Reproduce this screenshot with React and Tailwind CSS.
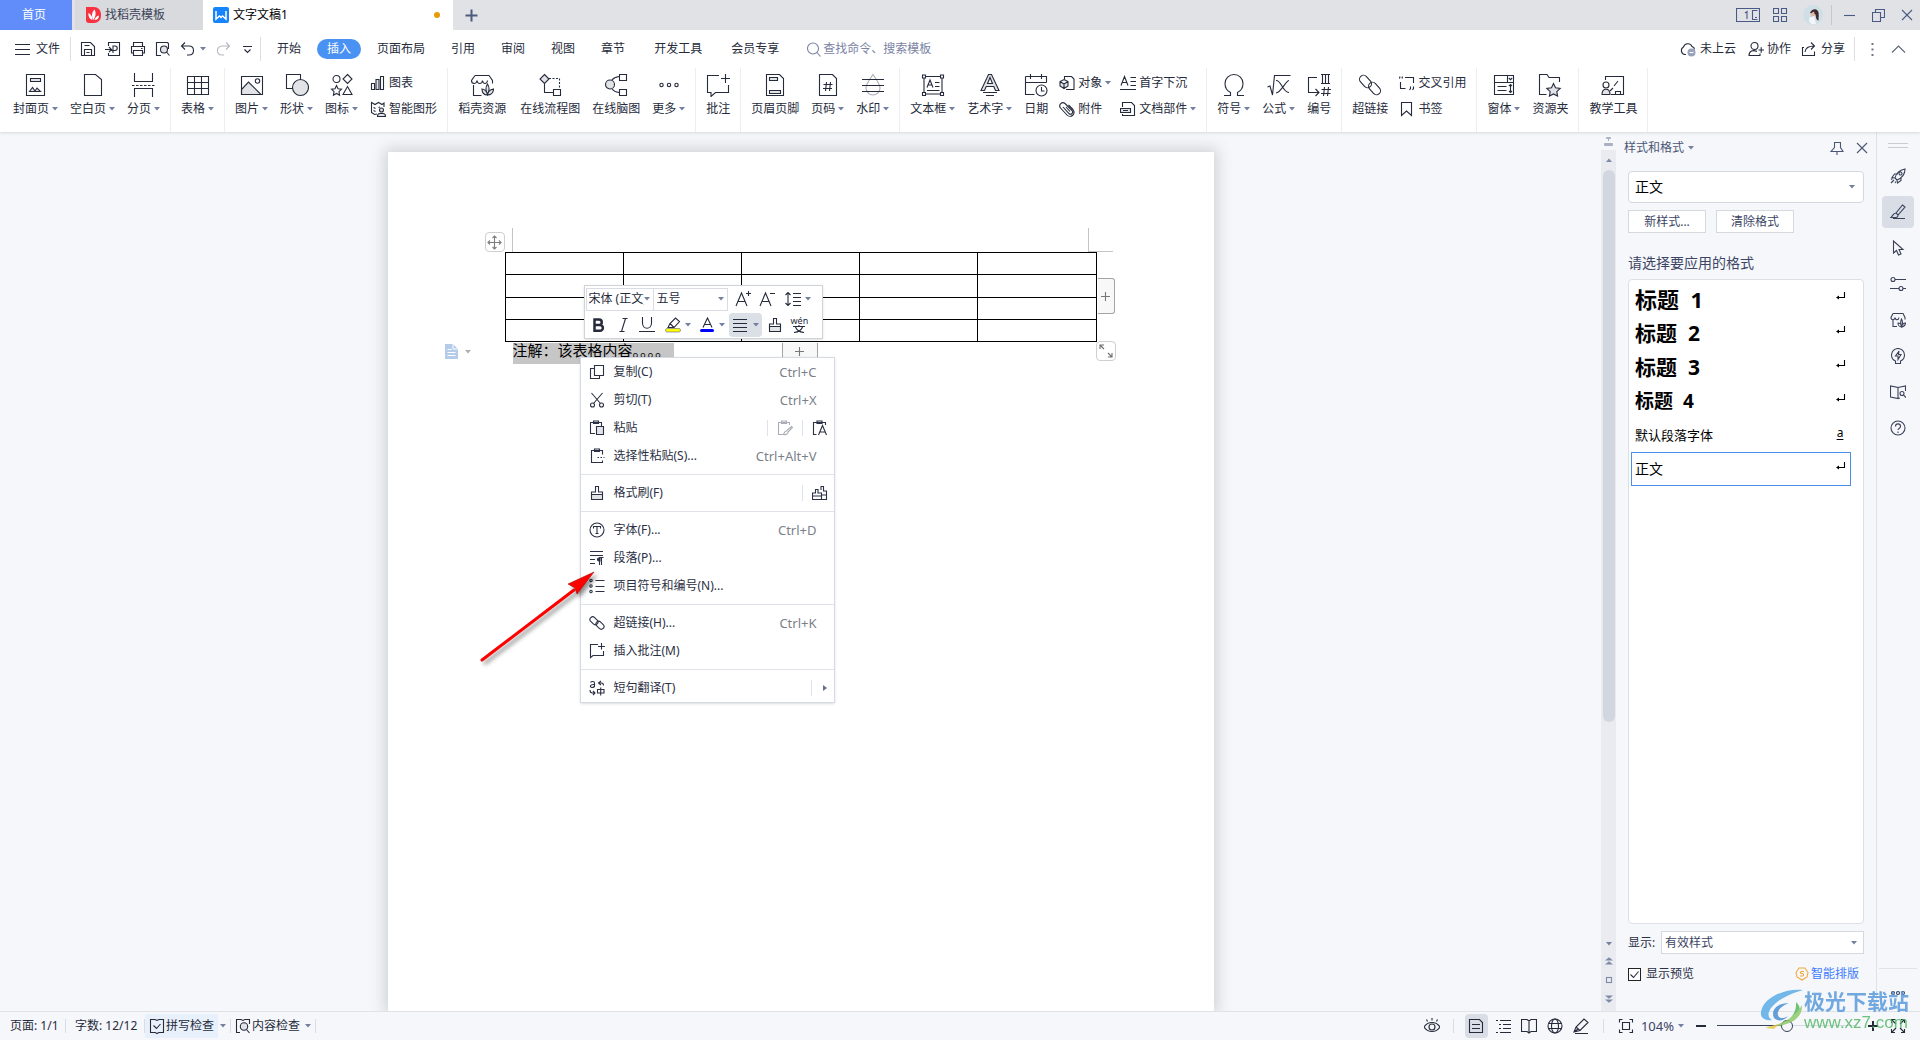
import React from "react";

/* ---------- shared primitives ---------- */

function Svg({ s = 16, w, h, className = "", children, sw = 1.1 }) {
  const W = w || s;
  const H = h || s;
  return (
    <svg
      width={W}
      height={H}
      viewBox={`0 0 ${W} ${H}`}
      fill="none"
      stroke="currentColor"
      strokeWidth={sw}
      className={"shrink-0 " + className}
      aria-hidden="true"
    >
      {children}
    </svg>
  );
}

function Caret({ className = "text-[#7580a0]" }) {
  return (
    <svg width="6" height="4" viewBox="0 0 6 4" className={"shrink-0 " + className} aria-hidden="true">
      <path d="M0 0h6L3 3.5z" fill="currentColor" />
    </svg>
  );
}

const G = "#e1e3e6";

/* ---------- ribbon icons, 24 x 24 ---------- */

const big = {
  cover: (
    <>
      <path d="M2.500 1.500h18v21h-18z" />
      <path d="M6.500 5.500h10v3h-10z" fill={G} />
      <path d="M5.500 18.500l3-4 2.500 3.500 2-3 3.500 3.500z" fill={G} />
    </>
  ),
  blank: <path d="M3.500 1.500h11l6 5v16h-17z" />,
  brk: (
    <>
      <path d="M2.500 0v8.500h18V0M2.500 24v-8.500h18V24" />
      <path d="M0 12.500h24" strokeDasharray="2.500 1.500" />
    </>
  ),
  table: <path d="M1.500 3.500h21v18h-21zM1.500 9.500h21M1.500 15.500h21M8.500 3.500v18M15.500 3.500v18" />,
  image: (
    <>
      <path d="M1.500 20.500v-4l7-7.500 12.500 12.500H1.500z" fill={G} />
      <path d="M1.500 3.500h21v18h-21z" />
      <circle cx="17.500" cy="8" r="2.200" />
    </>
  ),
  shape: (
    <>
      <path d="M1.500 1.500h14v14h-14z" />
      <circle cx="15.500" cy="14.500" r="8" fill={G} />
    </>
  ),
  icons: (
    <>
      <circle cx="6.500" cy="6" r="3.500" />
      <path d="M17.500 1.500l4.500 4.500-4.500 4.500L13 6z" />
      <path d="M6.500 12.500l1.500 3.200 3.500.5-2.500 2.400.6 3.600-3.100-1.700-3.100 1.700.6-3.600-2.500-2.400 3.500-.5z" />
      <path d="M17.500 13.500l4.500 8h-9z" />
    </>
  ),
  store: (
    <>
      <path d="M3.500 12v10.500h8M5 2.500h14l3.500 5v3M5 2.500L1.500 7.500c0 4 5 4 5.500 0 .5 4 5 4 5.500 0 .5 4 4.500 4 5 0" />
      <path d="M17.500 11c-2 3-2 7 0 11 2-4 2-8 0-11z" fill={G} />
      <path d="M17.500 22c-3.500 0-5.500-2.500-5.500-6 3 .5 5 2.500 5.500 6zM17.500 22c3.500 0 6-2.500 6-6-3 .5-5.500 2.500-6 6z" fill={G} />
    </>
  ),
  flow: (
    <>
      <path d="M6.500 1.500l4.500 4.500-4.500 4.500L2 6z" fill={G} />
      <path d="M6.500 10.500v9h9" />
      <path d="M11 5.500h10.500V16" strokeDasharray="2 1.500" />
      <path d="M15.500 16.500h7v6h-7z" />
    </>
  ),
  mind: (
    <>
      <circle cx="6" cy="11.500" r="4.500" fill={G} />
      <path d="M8 7c1.500-2 3.500-3 7-3.500M8 16c1.500 2 3.500 3 7 3.500" />
      <path d="M15.500 1.500h7v6h-7zM15.500 16.500h7v6h-7z" />
    </>
  ),
  more: (
    <>
      <circle cx="4.500" cy="12" r="1.700" />
      <circle cx="12" cy="12" r="1.700" />
      <circle cx="19.500" cy="12" r="1.700" />
    </>
  ),
  comment: <path d="M13 2.500H1.500v17h3.500v4l4.500-4h13V12M19.500 1v9M15 5.500h9" />,
  header: (
    <>
      <path d="M3.500 1.500h13l4 4v17h-17z" />
      <path d="M6.500 4.500h8v3h-8zM6.500 17.500h11v3h-11z" fill={G} />
    </>
  ),
  pageno: (
    <>
      <path d="M3.500 1.500h13l4 4v17h-17z" />
      <path d="M10.500 9l-1 9M14.500 9l-1 9M7.500 11.500h9M7 15.500h9" />
    </>
  ),
  water: (
    <>
      <path d="M12 1.500c4 6 7 9.500 7 13.500a7 7 0 0 1-14 0c0-4 3-7.500 7-13.500z" stroke="#a9adb8" />
      <path d="M1 6.500h22M1 12.500h22M1 18.500h22" />
    </>
  ),
  textbox: (
    <>
      <path d="M3 3.500h18v17.500H3z" />
      <path d="M1.500 2h3v3h-3zM19.500 2h3v3h-3zM1.500 19.500h3v3h-3zM19.500 19.500h3v3h-3z" fill="#fff" />
      <path d="M6 14.500L9 7l3 7.500M7 12h4M14 9.500h4.500M14 13.500h4.500M6 17.500h12.500" />
    </>
  ),
  wordart: (
    <>
      <path d="M10.500 1.500h3l7.500 16h-3.500l-1.700-4H8.200l-1.700 4H3zM9.500 10.500h5l-2.500-6z" fill={G} />
      <path d="M5 19.500h14M8 22.500h8" />
    </>
  ),
  date: (
    <>
      <path d="M1.500 3.500h21v6M1.500 3.500v18h9M1.500 9.500h21M6.500 1v5M17.500 1v5" />
      <circle cx="17.500" cy="17.500" r="5.500" fill="#fff" />
      <path d="M17.500 14v4h3" />
    </>
  ),
  omega: <path d="M2 22.500h6.500v-3C4.500 17.500 3 14 3 10.500a9 9 0 0 1 18 0c0 3.500-1.500 7-5.500 9v3H22" />,
  formula: <path d="M.5 14l2.500-1 2.500 9L7.500 2.500h16M9 7.500c5-1 7 12.500 13 12M22 7.500c-3 0-8 12-13 12.500" />,
  number: (
    <>
      <path d="M10 4.500H1.500v15h10M8.500 16l3.500 3.500L8.500 23" />
      <path d="M14 1.500h9M14 10.500h9M15.500 1.500v9M18.500 1.500v9M21.500 1.500v9M17.500 14l-1 9M21.500 14l-1 9M14.500 16.500H24M14 20.500h9.500" />
    </>
  ),
  link: (
    <>
      <rect x="0.500" y="4.500" width="14" height="8" rx="4" transform="rotate(48 7.500 8.500)" />
      <rect x="9.500" y="11.500" width="14" height="8" rx="4" transform="rotate(48 16.500 15.500)" />
    </>
  ),
  form: <path d="M2.500 2.500h19v19h-19zM2.500 9.500h19M15.500 2.500v7M5.500 13.500h9M5.500 17.500h9M18.500 12v7M17 13l1.500-1.500L20 13M17 18l1.500 1.500L20 18M16.800 5l1.700 1.700L20.200 5" />,
  folder: (
    <>
      <path d="M21.500 9V4.500H11l-2-3H1.500v20h7" />
      <path d="M15.500 10.500l2 4.300 4.700.6-3.400 3.200.8 4.500-4.100-2.200-4.100 2.200.8-4.500-3.400-3.200 4.700-.6z" fill={G} />
    </>
  ),
  teach: (
    <>
      <path d="M4.500 7V3.500h18v18H10M13 13l4-5M14.500 21.500v-3h5v3" />
      <circle cx="5" cy="12" r="3" />
      <path d="M1 21.500c0-7 8-7 8 0z" fill={G} />
      <path d="M9 18l3-3" />
    </>
  ),
};

const small = {
  chart: (
    <>
      <path d="M1.500 8.500h3v6h-3zM10.500 1.500h3v13h-3z" />
      <path d="M6 4.500h3v10H6z" fill={G} />
    </>
  ),
  smart: (
    <>
      <path d="M7 13l-2.500.5-3-2V1.500l3.500 2 3.500-2 3.500 2 2-1.500v4M3.500 6.500l2 1M3.500 9.500l2 1M8.500 6.500l1.500-.500" />
      <circle cx="11.500" cy="9" r="2" fill={G} />
      <path d="M7.500 15.500c0-2 1-3 2.500-3h3c1.500 0 2.500 1 2.500 3z" fill={G} />
    </>
  ),
  object: (
    <>
      <path d="M5.500 4V1.500h7l2.500 2.500v10.500H7" />
      <path d="M5 4.500l4 2v4.500l-4 2.500-4-2.500V6.500zM1 6.500l4 2.500 4-2.500M5 9v4" fill={G} />
    </>
  ),
  attach: <path d="M4 6l6 6.500a2 2 0 0 0 3-3L6 2.500a3.200 3.200 0 0 0-4.500 4.500l6.500 7a4 4 0 0 0 6-5.500L9.500 4M7 6l4 4.500" />,
  dropcap: <path d="M1 10.500L4.500 1.500 8 10.500M2.300 7.500h4.500M10.500 2.500H16M10.500 6.500H16M10.500 10.500H16M0 14.500h16" />,
  parts: (
    <>
      <path d="M2.500 6V1.500h9l3 3v10h-12V13" />
      <path d="M.5 7.500h10v4H.5zM3 9.500h5" fill={G} />
    </>
  ),
  cross: <path d="M.5 3.500L1 1.500M3 3.500l.5-2M1.500 7v6.500h5M6 2.500h8.500V8M11.500 11.500v2l-1 1.500M14.500 11.500v2l-1 1.500" />,
  bookmark: <path d="M2.500 1.500h10v13l-5-4.500-5 4.500z" />,
  save: (
    <>
      <path d="M1.500 1.500h9l4 4v9h-13z" />
      <path d="M4.500 14.500v-6h7v6M6.500 11.500h3M4.500 4.500h5" />
    </>
  ),
  out: <path d="M3.500 5V1.500h11v13h-11V12M0 8.500h6M4 6l2.500 2.500L4 11M8 12V5h2a2 2 0 0 1 0 4.500H6" />,
  print: <path d="M3.500 5V1.500h9V5M3.500 12H1.500V5.500h13V12h-2M3.500 9.500h9v5h-9zM11 7.500h1.500" />,
  find: (
    <>
      <path d="M6 14.500H1.500v-13h11l1 1V8" />
      <circle cx="9" cy="8.500" r="3.500" fill={G} />
      <path d="M11.500 11l3 3.500" />
    </>
  ),
  undo: <path d="M5 1.500L1.500 5 5 8.500M1.500 5H9c6 0 6 9 0 9H7" />,
  redo: <path d="M11 1.500L14.500 5 11 8.500M14.500 5H7c-6 0-6 9 0 9h2" />,
  brush: (
    <>
      <path d="M6.500 7V1.500h3V7h4v3h-11V7z" />
      <path d="M2.500 9.500h11v5h-11z" fill={G} />
    </>
  ),
  link: (
    <>
      <rect x="0.500" y="3" width="9" height="5.500" rx="2.700" transform="rotate(45 5 5.700)" />
      <rect x="6.500" y="7.500" width="9" height="5.500" rx="2.700" transform="rotate(45 11 10.200)" />
    </>
  ),
  copy: <path d="M5.500 1.500h9v10h-9zM5.500 4.500h-4v10h9v-3" />,
  cut: (
    <>
      <path d="M2.500 1L11.500 11.500M13.500 1L4.500 11.500" />
      <circle cx="3.500" cy="13" r="2" />
      <circle cx="12.500" cy="13" r="2" />
    </>
  ),
  paste: (
    <>
      <path d="M6 13.500H1.500v-11h11V6M4.500 1h5v2.500h-5z" />
      <path d="M7.500 6.500h7v8h-7z" fill={G} />
    </>
  ),
  special: (
    <>
      <path d="M13.500 6.500v-4h-11v12h11v-2M5.500 1h5v2.500h-5z" />
      <path d="M8.500 9.500h7" strokeDasharray="1.500 1.500" />
    </>
  ),
  pasteBrush: <path d="M6 14.500H1.500v-12h11V5M4.500 1h5v2.500h-5zM14.500 6.500l-5 4.500c-2 0-2 2-3 3.500 2 .5 4.500 0 4.500-2.500l4.500-4.500z" />,
  pasteText: <path d="M4.500 14.500h-3v-12h12V5M5 1h5v2.500H5zM6.500 15l4-9.500 4 9.500M8 12h5" />,
  brushes: <path d="M9 5V1.500h2.500V6h3v8.500H10M3.500 8V4.500H6V8h3.500v6.500H.5V8zM.5 11h9M10 10h4.500" />,
  font: (
    <>
      <circle cx="8" cy="8" r="7" />
      <path d="M4.500 6.500v-2h7v2M8 4.500v7M6.500 11.500h3" />
    </>
  ),
  para: (
    <>
      <path d="M1 1.500h13M1 5.500h13M1 9.500h5M1 13.500h5" />
      <path d="M10.500 15V8M12.500 15V8M14.500 7.500H10" />
      <path d="M11 8h-1a1.500 1.500 0 0 0 0 3h1z" fill="currentColor" />
    </>
  ),
  list: (
    <>
      <circle cx="2" cy="2.500" r="1.200" />
      <circle cx="2" cy="8" r="1.200" />
      <circle cx="2" cy="13.500" r="1.200" />
      <path d="M6.500 2.500h9M6.500 8.500h9M6.500 13.500h9" />
    </>
  ),
  note: <path d="M9 1.500H1.500v13l2.500-2h10.500V8M12.500 0v6.500M9 3.500h7" />,
  translate: <path d="M1.500 2.500c1-1.500 4-1.500 4 .5v4M5.500 4.500c-5-.5-5 3-2.500 3 1.500 0 2.500-1 2.500-2M12 1L9.500 3 12 5M9.500 3h3c1.500 0 2 1 2 2.500M1 10c0 2 1 3 2.500 3H6M4 11l2 2-2 2M8.500 9.500h6.500v3.500H8.500zM11.700 7.500v8" />,
};

/* ---------- title bar ---------- */

function TitleBar() {
  return (
    <div className="flex h-[30px] shrink-0 bg-[#e1e2e6]">
      <button className="w-[72px] bg-[#618dfb] pr-1 text-white">首页</button>
      <button className="ml-[3px] flex w-32 items-center gap-1 bg-[#d8dadd] pl-[11px] text-[#3c4257]">
        <svg width="15" height="16" viewBox="0 0 15 16" aria-hidden="true">
          <path d="M0 0h8a7 7 0 0 1 7 7v2a7 7 0 0 1-7 7H3a3 3 0 0 1-3-3z" fill="#f9303f" />
          <path d="M7.500 13C5 9 6 5 8.500 2.500 10.500 6 9.500 10 7.500 13zM6.500 13C3.500 12 2 9 2.500 6c2 1 4 3.500 4 7zM8.500 13c1-3 2.500-4 4.500-4.500 0 2.500-1.500 4.500-4.500 4.500z" fill="#fff" />
        </svg>
        找稻壳模板
      </button>
      <button className="flex w-[250px] items-center gap-1 bg-white pl-[10px] pr-[13px] text-black">
        <svg width="16" height="16" viewBox="0 0 16 16" aria-hidden="true">
          <rect width="16" height="16" rx="2" fill="#1684fc" />
          <path d="M3 4v8l3.500-3L8 10.500 9.500 9l3.500 3V4" fill="none" stroke="#fff" strokeWidth="1.500" />
        </svg>
        <span className="flex-1 text-left">文字文稿1</span>
        <span className="size-[6px] rounded-full bg-[#e79b07]" />
      </button>
      <button className="flex w-9 items-center justify-center text-[#4c5a7e]" aria-label="新建">
        <Svg s={13} sw={2}><path d="M6.500 .5v12M.5 6.500h12" /></Svg>
      </button>
      <div className="flex-1" />
      <div className="flex items-center pr-[7px] text-[#4a5a86]">
        <button aria-label="视图" className="mr-[13px]">
          <Svg w={24} h={15}>
            <path d="M.5 .5h23v13H.5zM21.500 2.500h-5v9h5M19 9.500h2" />
            <path d="M9 5l2-1.500V11" />
          </Svg>
        </button>
        <button aria-label="应用" className="mr-[15px]">
          <Svg s={15}><path d="M.5 .5h5v5h-5zM8.500 .5h5v5h-5zM.5 8.500h5v5h-5zM8.500 8.500h5v5h-5z" /></Svg>
        </button>
        <button aria-label="账户" className="mr-2">
          <svg width="20" height="20" viewBox="0 0 20 20" aria-hidden="true">
            <circle cx="10" cy="10" r="10" fill="#cfdfe6" />
            <path d="M7 8c1-3 4-4.500 6-3.500 3 1 3 4 2.500 11-2 0-2.500-3-3-6z" fill="#3a2a2e" />
            <path d="M7.500 8.500l3.500-2 1 4-3.500 1.500z" fill="#e2b7a4" />
            <path d="M6 13l5-2 2 8c-4 1-7 0-7-6z" fill="#f3f6f8" />
          </svg>
        </button>
        <span className="mr-3 h-5 w-px bg-[#c4c7ce]" />
        <button aria-label="最小化" className="mr-[17px]"><Svg s={11}><path d="M0 5.500h11" /></Svg></button>
        <button aria-label="还原" className="mr-4"><Svg s={13}><path d="M.5 3.500h8v9h-8zM3.500 3.500v-3h9v8h-4" /></Svg></button>
        <button aria-label="关闭"><Svg s={12}><path d="M1 1l10 10M11 1L1 11" /></Svg></button>
      </div>
    </div>
  );
}

/* ---------- menu row ---------- */

function MenuRow() {
  return (
    <div className="flex h-[38px] shrink-0 items-center pl-[15px] pr-[14px]">
      <button className="flex items-center gap-[6px]">
        <Svg s={15}><path d="M0 2.500h15M0 7.500h15M0 12.500h15" /></Svg>
        文件
      </button>
      <span className="ml-[10px] mr-[9px] h-6 w-px bg-[#dcdee2]" />
      <div className="flex items-center gap-[9px]">
        <button aria-label="保存"><Svg>{small.save}</Svg></button>
        <button aria-label="输出"><Svg>{small.out}</Svg></button>
        <button aria-label="打印"><Svg>{small.print}</Svg></button>
        <button aria-label="打印预览"><Svg>{small.find}</Svg></button>
        <button aria-label="撤销" className="flex items-center gap-1"><Svg>{small.undo}</Svg><Caret /></button>
        <button aria-label="恢复" className="text-[#b4b7bf]"><Svg>{small.redo}</Svg></button>
        <button aria-label="自定义" className="ml-[3px]"><Svg s={9}><path d="M0 1.500h9M1.500 4.500l3 3 3-3" /></Svg></button>
      </div>
      <span className="ml-2 mr-4 h-6 w-px bg-[#dcdee2]" />
      <nav className="flex items-center">
        <button>开始</button>
        <button className="ml-4 mr-4 h-5 rounded-full bg-[#4991f2] px-[10px] text-white">插入</button>
        <div className="flex gap-[26px]">
          <button>页面布局</button>
          <button>引用</button>
          <button>审阅</button>
          <button>视图</button>
          <button>章节</button>
        </div>
        <button className="ml-[29px]">开发工具</button>
        <button className="ml-[29px]">会员专享</button>
      </nav>
      <label className="ml-7 flex items-center gap-px text-[#7983a3]">
        <Svg s={15}><circle cx="6" cy="6.500" r="5.500" /><path d="M10 10.500l3.500 4" /></Svg>
        <input className="w-32 outline-none placeholder:text-[#7983a3]" placeholder="查找命令、搜索模板" />
      </label>
      <div className="flex-1" />
      <button className="flex items-center gap-1">
        <Svg><path d="M6 13.500H5A4 4 0 0 1 3.500 6a4.500 4.500 0 0 1 8.500-.5c1.500.5 2.500 1.500 2.500 3" /><circle cx="11.500" cy="11.500" r="4" fill="#98a2bb" stroke="none" /><path d="M9.500 11.500h4" stroke="#fff" /></Svg>
        未上云
      </button>
      <button className="ml-3 flex items-center gap-[3px]">
        <Svg><circle cx="6.500" cy="5" r="3.500" /><path d="M9 10.500c-4-2-8-.5-8 4h11v-2M10.500 9h5.500M13.200 6.200v5.500" /></Svg>
        协作
      </button>
      <button className="ml-[10px] flex items-center gap-1">
        <Svg><path d="M3 6.500H1.500v8h12v-4M4 11c.5-4 3-6 9-6M10 1.500L13.500 5 10 8.500" /></Svg>
        分享
      </button>
      <span className="ml-[9px] h-6 w-px bg-[#dcdee2]" />
      <button aria-label="更多" className="ml-4 text-[#6f7689]">
        <Svg w={3} h={13} sw={2}><path d="M1.500 0v2M1.500 5.500v2M1.500 11v2" /></Svg>
      </button>
      <button aria-label="折叠功能区" className="ml-[17px] text-[#5c6478]"><Svg s={15}><path d="M1 10.500l6.500-6.500 6.500 6.500" /></Svg></button>
    </div>
  );
}

/* ---------- ribbon ---------- */

function Big({ icon, label, caret, wide }) {
  return (
    <button className={"flex flex-col items-center gap-[3px] " + (wide ? "ml-[2px] w-[60px]" : "")}>
      <Svg s={24}>{big[icon]}</Svg>
      <span className="flex items-center gap-[3px] leading-[18px]">
        {label}
        {caret && <Caret />}
      </span>
    </button>
  );
}

function Small({ icon, label, caret }) {
  return (
    <button className="flex items-center gap-[3px] leading-[18px]">
      <Svg>{small[icon]}</Svg>
      {label}
      {caret && <Caret />}
    </button>
  );
}

function Group({ children }) {
  return <div className="flex gap-3 border-r border-[#eceef1] px-[10px] pt-[5px]">{children}</div>;
}

function Stack({ children }) {
  return <div className="flex flex-col gap-[8px] pt-px">{children}</div>;
}

function Ribbon() {
  return (
    <div className="flex h-16 shrink-0 pl-[3px]">
      <Group>
        <Big icon="cover" label="封面页" caret />
        <Big icon="blank" label="空白页" caret />
        <Big icon="brk" label="分页" caret />
      </Group>
      <Group><Big icon="table" label="表格" caret /></Group>
      <Group>
        <Big icon="image" label="图片" caret />
        <Big icon="shape" label="形状" caret />
        <Big icon="icons" label="图标" caret />
        <Stack>
          <Small icon="chart" label="图表" />
          <Small icon="smart" label="智能图形" />
        </Stack>
      </Group>
      <Group>
        <Big icon="store" label="稻壳资源" />
        <Big icon="flow" label="在线流程图" wide />
        <Big icon="mind" label="在线脑图" />
        <Big icon="more" label="更多" caret />
      </Group>
      <Group><Big icon="comment" label="批注" /></Group>
      <Group>
        <Big icon="header" label="页眉页脚" />
        <Big icon="pageno" label="页码" caret />
        <Big icon="water" label="水印" caret />
      </Group>
      <Group>
        <Big icon="textbox" label="文本框" caret />
        <Big icon="wordart" label="艺术字" caret />
        <Big icon="date" label="日期" />
        <div className="-ml-px flex gap-[9px]">
          <Stack>
            <Small icon="object" label="对象" caret />
            <Small icon="attach" label="附件" />
          </Stack>
          <Stack>
            <Small icon="dropcap" label="首字下沉" />
            <Small icon="parts" label="文档部件" caret />
          </Stack>
        </div>
      </Group>
      <Group>
        <Big icon="omega" label="符号" caret />
        <Big icon="formula" label="公式" caret />
        <Big icon="number" label="编号" />
      </Group>
      <Group>
        <Big icon="link" label="超链接" />
        <div className="-ml-px">
          <Stack>
            <Small icon="cross" label="交叉引用" />
            <Small icon="bookmark" label="书签" />
          </Stack>
        </div>
      </Group>
      <Group>
        <Big icon="form" label="窗体" caret />
        <Big icon="folder" label="资源夹" />
      </Group>
      <Group><Big icon="teach" label="教学工具" /></Group>
    </div>
  );
}

/* ---------- floating format bar ---------- */

function MiniToolbar() {
  return (
    <div className="absolute left-[196px] top-[133px] w-[239px] border border-[#cfd3da] bg-white p-px shadow-sm">
      <div className="flex h-6 items-center">
        <label className="flex h-[23px] w-[68px] items-center border border-[#d9dce2] pl-[2px] pr-[3px]">
          <select aria-label="字体" className="w-0 flex-1 appearance-none overflow-hidden text-clip whitespace-nowrap outline-none">
            <option>宋体 (正文)</option>
          </select>
          <Caret />
        </label>
        <label className="flex h-[23px] w-[74px] items-center border border-l-0 border-[#d9dce2] px-[3px]">
          <select aria-label="字号" className="w-0 flex-1 appearance-none outline-none">
            <option>五号</option>
          </select>
          <Caret />
        </label>
        <button aria-label="增大字号" className="ml-[7px]"><Svg><path d="M1 15L6.500 2l5.500 13M3 10.500h7M13.500 0v5M11 2.500h5" /></Svg></button>
        <button aria-label="减小字号" className="ml-2"><Svg><path d="M1 15L6.500 2l5.500 13M3 10.500h7M11 2.500h5" /></Svg></button>
        <button aria-label="行距" className="ml-[10px] flex items-center gap-1"><Svg><path d="M3 1.500v13M.5 4L3 1.500 5.500 4M.5 12L3 14.500 5.500 12M8 2.500h8M8 6.500h8M8 10.500h8M8 14.500h8" /></Svg><Caret /></button>
      </div>
      <div className="mt-[2px] flex h-6 items-center pl-[5px]">
        <button aria-label="加粗" className="w-[18px]"><Svg sw={2.5}><path d="M3.500 2.500H8a2.700 2.700 0 0 1 0 5.500H3.500zM3.500 8H9a2.900 2.900 0 0 1 0 5.800H3.500z" /></Svg></button>
        <button aria-label="倾斜" className="ml-[7px]"><Svg><path d="M6.500 1.500h5M3.500 14.500h5M9.500 1.500l-4 13" /></Svg></button>
        <button aria-label="下划线" className="ml-[7px]"><Svg><path d="M3.500 0v6c0 7 9 7 9 0V0M0 14.500h16" /></Svg></button>
        <button aria-label="突出显示" className="ml-[10px] flex items-center gap-1">
          <Svg>
            <path d="M3 10.500l2-4 5.500-5.500 4 3.500-5.500 6H3zM5 6.500l4 4" />
            <rect x=".5" y="11.500" width="15" height="3.500" rx="1.700" fill="#ff0" stroke="#6f7689" strokeWidth=".7" />
          </Svg>
          <Caret />
        </button>
        <button aria-label="字体颜色" className="ml-[9px] flex items-center gap-1">
          <Svg w={15} h={16}>
            <path d="M3 10.500L7.500 1 12 10.500M4.500 7.500h6" />
            <rect x="0" y="12" width="14" height="3" rx="1.500" fill="#00f" stroke="none" />
          </Svg>
          <Caret />
        </button>
        <button aria-label="对齐" className="ml-1 flex h-6 w-[33px] items-center justify-center gap-[5px] rounded-sm bg-[#dbe0e6]">
          <Svg><path d="M1 2.500h14M1 6.500h14M1 10.500h14M1 14.500h14" /></Svg>
          <Caret />
        </button>
        <button aria-label="格式刷" className="ml-[5px]"><Svg>{small.brush}</Svg></button>
        <button aria-label="拼音指南" className="ml-2 flex flex-col items-center text-[9px] leading-[8px]">
          <span>wén</span>
          <Svg w={12} h={8}><path d="M0 1.500h12M6 0v1.500M2.500 2c1 3 4 5 8.500 5.500M9.500 2c-1 3-4 5-8.500 5.500" /></Svg>
        </button>
      </div>
    </div>
  );
}

/* ---------- context menu ---------- */

function Item({ icon, label, hint, children }) {
  return (
    <button className="flex h-7 w-full items-center gap-[9px] pl-2 text-left text-[#2b3045]">
      <Svg>{small[icon]}</Svg>
      <span className="flex-1">{label}</span>
      {hint && <span className="pr-[17px] text-[13px] text-[#7b7f8a]">{hint}</span>}
      {children}
    </button>
  );
}

const Rule = () => <hr className="my-1 border-[#dfe2ea]" />;
const Bar = () => <span className="h-4 w-px bg-[#dfe2ea]" />;

function ContextMenu() {
  return (
    <div className="absolute left-[192px] top-[205px] w-[255px] border border-[#d5dae5] bg-white shadow-sm">
      <Item icon="copy" label="复制(C)" hint="Ctrl+C" />
      <Item icon="cut" label="剪切(T)" hint="Ctrl+X" />
      <Item icon="paste" label="粘贴">
        <span className="flex items-center gap-[9px] pr-[6px]">
          <Bar />
          <Svg className="text-[#a9adb5]">{small.pasteBrush}</Svg>
          <Bar />
          <Svg>{small.pasteText}</Svg>
        </span>
      </Item>
      <Item icon="special" label="选择性粘贴(S)..." hint="Ctrl+Alt+V" />
      <Rule />
      <Item icon="brush" label="格式刷(F)">
        <span className="flex items-center gap-[9px] pr-[6px]">
          <Bar />
          <Svg>{small.brushes}</Svg>
        </span>
      </Item>
      <Rule />
      <Item icon="font" label="字体(F)..." hint="Ctrl+D" />
      <Item icon="para" label="段落(P)..." />
      <Item icon="list" label="项目符号和编号(N)..." />
      <Rule />
      <Item icon="link" label="超链接(H)..." hint="Ctrl+K" />
      <Item icon="note" label="插入批注(M)" />
      <Rule />
      <Item icon="translate" label="短句翻译(T)">
        <span className="flex items-center gap-[11px] pr-[7px] text-[#68718c]">
          <Bar />
          <svg width="4" height="6" viewBox="0 0 4 6" aria-hidden="true"><path d="M0 0v6l4-3z" fill="currentColor" /></svg>
        </span>
      </Item>
    </div>
  );
}

/* ---------- document ---------- */

function Document() {
  const rows = ["h-[22px]", "h-[23px]", "h-[22px]", "h-[22px]"];
  return (
    <main className="flex min-w-0 flex-1 justify-center overflow-hidden pt-5">
      <div className="relative w-[826px] shrink-0 bg-white pl-[117px] pt-[100px] shadow-[0_0_14px_3px_rgba(90,95,105,0.25)]">
        <table className="w-[592px] table-fixed border-collapse border border-black">
          <tbody>
            {rows.map((h, r) => (
              <tr key={r} className={h}>
                {[0, 1, 2, 3, 4].map((c) => (
                  <td key={c} className="border border-black p-0" />
                ))}
              </tr>
            ))}
          </tbody>
        </table>
        <p className="ml-2 mt-px w-fit bg-[#c6c6c6] pb-2 pr-[11px] font-['Noto_Sans_CJK_SC',sans-serif] text-[15px] leading-[13px] text-black">
          注解：该表格内容<span className="[font-feature-settings:'halt']">。。。。</span>
        </p>

        {/* margin corner marks */}
        <span className="absolute left-[124px] top-[76px] h-6 w-px bg-[#c4c4c4]" />
        <span className="absolute left-[700px] top-[76px] h-6 w-[25px] border-b border-l border-[#c4c4c4]" />

        {/* table handles */}
        <button aria-label="移动表格" className="absolute left-[97px] top-[80px] flex size-5 items-center justify-center rounded-sm border border-[#cfcfcf] bg-white text-[#7d7d7d]">
          <Svg s={15}><path d="M7.500 1v13M1 7.500h13M5.500 3l2-2 2 2M5.500 12l2 2 2-2M3 5.500l-2 2 2 2M12 5.500l2 2-2 2" /></Svg>
        </button>
        <button aria-label="添加列" className="absolute left-[710px] top-[126px] flex h-9 w-[17px] items-center justify-center rounded-r-[3px] border border-l-0 border-[#a3a3a3] bg-[#f8f8f8] text-[#777]">
          <Svg s={9}><path d="M4.500 0v9M0 4.500h9" /></Svg>
        </button>
        <button aria-label="缩放表格" className="absolute left-[708px] top-[189px] flex size-5 items-center justify-center rounded-sm border border-[#cfcfcf] bg-white text-[#6e6e6e]">
          <Svg s={14}><path d="M5 5L1.500 1.500M1 5V1h4M9 9l3.500 3.500M13 9v4H9" /></Svg>
        </button>
        <button aria-label="添加行" className="absolute left-[394px] top-[191px] flex h-4 w-9 items-center justify-center border-x border-[#a3a3a3] bg-[#f8f8f8] text-[#777]">
          <Svg s={9}><path d="M4.500 0v9M0 4.500h9" /></Svg>
        </button>
        <button aria-label="粘贴选项" className="absolute left-[57px] top-[192px] flex items-center gap-[7px]">
          <svg width="13" height="15" viewBox="0 0 13 15" aria-hidden="true">
            <path d="M0 0h8l5 5v10H0z" fill="#b4cbea" />
            <path d="M2.500 5.500h4M2.500 8.500h8M2.500 11.500h8M8 0v5h5" stroke="#fff" fill="none" />
          </svg>
          <Caret className="text-[#b0b0b0]" />
        </button>

        <MiniToolbar />
        <ContextMenu />

        <svg width="130" height="106" viewBox="0 0 130 106" className="absolute left-[88px] top-[411px] drop-shadow-[3px_3px_2px_rgba(0,0,0,0.45)]" aria-hidden="true">
          <path d="M6 97L98 27" stroke="#f00" strokeWidth="3" strokeLinecap="round" />
          <path d="M118 9L92 21l7 4 2 6z" fill="#f00" stroke="#a01010" strokeWidth=".6" />
        </svg>
      </div>
    </main>
  );
}

function ScrollColumn() {
  return (
    <div className="flex w-[15px] shrink-0 flex-col items-center text-[#7f8aa8]">
      <div className="flex h-[18px] items-center">
        <Svg s={9} sw={1} className="text-[#aab1c2]"><path d="M2.500 .5h4v1h-4zM4.500 2v2M.5 6.500h8v2h-8z" fill="currentColor" /></Svg>
      </div>
      <div className="flex w-full flex-1 flex-col items-center bg-[#e9ebf1]">
        <Caret className="my-[8px] rotate-180" />
        <div className="h-[552px] w-3 rounded-full bg-[#d2d6df]" />
        <div className="flex-1" />
        <div className="flex flex-col items-center gap-[11px] pb-[8px]">
          <Caret />
          <Svg s={8}><path d="M1.500 3h5L4 1zM1.500 7h5L4 5z" fill="currentColor" /></Svg>
          <Svg s={8}><rect x="1.500" y="1.500" width="5" height="5" /></Svg>
          <Svg s={8}><path d="M1.500 1h5L4 3zM1.500 5h5L4 7z" fill="currentColor" /></Svg>
        </div>
      </div>
    </div>
  );
}

/* ---------- styles panel ---------- */

const Return = () => (
  <Svg w={11} h={14} className="text-black">
    <path d="M9.500 0v5.500H2" />
    <path d="M4 3.500v4L1 5.500z" fill="currentColor" stroke="none" />
  </Svg>
);

const heading = "whitespace-pre font-bold ";

const styles = [
  { name: "标题  1", cls: heading + "text-[22px]" },
  { name: "标题  2", cls: heading + "text-[21px]" },
  { name: "标题  3", cls: heading + "text-[21px]" },
  { name: "标题  4", cls: heading + "text-[19px]" },
  { name: "默认段落字体", cls: "text-[13px]", char: true },
  { name: "正文", cls: "text-[14px]", on: true },
];

function StylesPanel() {
  return (
    <aside className="flex w-[261px] shrink-0 flex-col border-r border-[#dfe2e7] px-3 pb-7 text-[#3c4565]">
      <header className="-mx-1 flex h-[31px] items-center text-[#4b5675]">
        <button className="flex items-center gap-1">样式和格式<Caret /></button>
        <span className="flex-1" />
        <button aria-label="固定" className="mr-3"><Svg s={14}><path d="M4 1.500h7M4.500 1.500v5L1 10.500h12L10.500 6.500v-5M7 10.500V14" /></Svg></button>
        <button aria-label="关闭窗格"><Svg s={12}><path d="M1 1l10 10M11 1L1 11" /></Svg></button>
      </header>
      <label className="mt-2 flex h-8 items-center rounded-sm border border-[#d4d8df] bg-white pl-[6px] pr-2">
        <select aria-label="当前样式" className="flex-1 appearance-none text-[14px] text-black outline-none"><option>正文</option></select>
        <Caret />
      </label>
      <div className="mt-[7px] flex gap-[10px]">
        <button className="h-[23px] w-[78px] border border-[#d4d8df] bg-white leading-none">新样式...</button>
        <button className="h-[23px] w-[78px] border border-[#d4d8df] bg-white leading-none">清除格式</button>
      </div>
      <h2 className="mt-[19px] text-[14px] leading-[22px]">请选择要应用的格式</h2>
      <ul className="mt-[5px] flex-1 rounded-sm border border-[#dcdfe5] bg-white px-[2px] pt-[2px] text-black">
        {styles.map((s) => (
          <li key={s.name}>
            <button
              className={
                "flex h-[34px] w-[220px] items-center justify-between border pl-[3px] pr-1 text-left leading-none " +
                (s.on ? "border-[#4a8fec]" : "border-transparent")
              }
            >
              <span className={s.cls}>{s.name}</span>
              {s.char ? <span className="w-3 pb-1 text-center text-[12px] underline underline-offset-2">a</span> : <Return />}
            </button>
          </li>
        ))}
      </ul>
      <div className="mt-[7px] flex items-center text-[#2b3045]">
        <label htmlFor="scope" className="w-[33px]">显示:</label>
        <div className="flex h-[23px] flex-1 items-center border border-[#d4d8df] bg-white pl-[3px] pr-[6px]">
          <select id="scope" className="flex-1 appearance-none text-[#3c4565] outline-none"><option>有效样式</option></select>
          <Caret />
        </div>
      </div>
      <div className="mt-[11px] flex items-center justify-between">
        <label className="flex items-center gap-[5px] text-[#2b3045]">
          <span className="grid size-[13px]">
            <input type="checkbox" defaultChecked className="col-start-1 row-start-1 size-[13px] appearance-none border border-[#222] bg-white" />
            <Svg s={13} className="pointer-events-none col-start-1 row-start-1"><path d="M2.500 6.500l3 3 5-6" /></Svg>
          </span>
          显示预览
        </label>
        <a href="#layout" className="flex items-center gap-[2px] pr-[5px] text-[#3d7bff]">
          <Svg s={14} className="text-[#f0a93c]"><path d="M4 1h6l3 4.500-1 4.500-5 3-5-3L1 5.500zM9 4.500H6.500c-1.500 0-1.500 2 0 2h1c1.500 0 1.500 2.500 0 2.500H5" /></Svg>
          智能排版
        </a>
      </div>
    </aside>
  );
}

/* ---------- right tool strip ---------- */

const tools = [
  ["助手", <path key="a" d="M7 12L5 10c1-5 5-8 10-9 0 5-3 9-8 11zM5 10L2 9.500 4.500 6H8M7 12l.5 3 3.500-2.500V9M1 15l3-3M1 11.500l1.500-1M5 15l1-1.500M10.500 4a1.500 1.500 0 1 1 0 3 1.500 1.500 0 0 1 0-3z" />],
  ["样式", <path key="a" d="M6 9l6.500-8 2.500 2-7 8zM6 9c-3 0-3 3-5 4.500h5c2 0 2-1 2-2.500M3 14.500h12" />],
  ["选择", <path key="a" d="M3.500 1v12l3-2.500 2 4.500 2.500-1-2-4.500h4z" />],
  ["设置", <path key="a" d="M5 3.500h11M0 12.500h9M13 12.500h3M1 3.500a2 2 0 1 1 4 0 2 2 0 0 1-4 0zM9 12.500a2 2 0 1 1 4 0 2 2 0 0 1-4 0z" />],
  ["资源", <path key="a" d="M3 8v6.500h4M3 1.500h10l2 4v2M3 1.500l-2 4c0 3 3.500 3 4 0 .5 3 3.500 3 4 0M11.500 7c-1 2-1 5 0 8 1.200-3 1.200-6 0-8zM11.500 15c-2 0-3.500-2-3.500-4 2 0 3.500 2 3.500 4zM11.500 15c2 0 4-2 4-4-2 0-3.500 2-4 4z" />],
  ["灵感", <path key="a" d="M5.500 13C3 12 1.500 9.500 1.500 7a6.500 6.500 0 0 1 13 0c0 2.500-1.500 5-4 6v2.500h-5zM9 3L5.500 8H8v3.500l3-5H8.500z" />],
  ["查阅", <path key="a" d="M8 3.500v11L.5 13V2zM8 3.500L15.500 2v5M8 14.500l2-.5M10 9.500a2 2 0 1 1 4 0 2 2 0 0 1-4 0zM14 11.500l2 2" />],
  ["帮助", <path key="a" d="M1 8a7 7 0 1 1 14 0A7 7 0 0 1 1 8zM5.500 6.500c0-3.500 5-3.500 5 0 0 2-2.500 2-2.500 3.500M8 11.500V13" />],
];

function ToolStrip() {
  return (
    <aside className="flex w-[43px] shrink-0 flex-col items-center pr-px pt-[11px] text-[#3a4159]">
      <span className="h-[5px] w-5 border-y border-[#c9ccd3]" />
      <div className="mt-3 flex flex-col gap-1">
        {tools.map(([name, icon], i) => (
          <button key={name} aria-label={name} className={"flex size-8 items-center justify-center rounded-sm " + (i === 1 ? "bg-[#d9dee6]" : "")}>
            <Svg>{icon}</Svg>
          </button>
        ))}
      </div>
      <div className="flex-1" />
      <div className="flex h-[43px] w-[38px] justify-center border-t border-[#dfe2e7] pt-5">
        <Svg w={16} h={8}><circle cx="3" cy="4" r="1.500" /><circle cx="8" cy="4" r="1.500" /><circle cx="13" cy="4" r="1.500" /></Svg>
      </div>
    </aside>
  );
}

/* ---------- status bar ---------- */

const Sep = () => <span className="h-[14px] w-px shrink-0 bg-[#dadde3]" />;

function StatusBar() {
  return (
    <footer className="flex h-[29px] shrink-0 items-center border-t border-[#dfe2e7] bg-[#f5f7fa] pb-px pl-[10px] pr-[14px]">
      <span className="w-[55px]">页面: 1/1</span>
      <Sep />
      <span className="w-[78px] pl-[9px]">字数: 12/12</span>
      <Sep />
      <button className="flex h-6 w-[73px] items-center gap-px bg-[#e8f0fb] pl-1">
        <Svg><path d="M6 1.500H1.500v13H6l2 1 2-1h4.500v-13H10l-2 1zM4.500 7.500l3 3 4-4.500" /></Svg>
        拼写检查
      </button>
      <span className="flex w-3 pl-[2px]"><Caret /></span>
      <Sep />
      <button className="ml-[4px] flex items-center gap-px">
        <Svg><path d="M5 14.500H1.500v-13H6l2 1 2-1h4.500V6" /><circle cx="9" cy="8.500" r="3.700" fill={G} /><path d="M11.500 11.500l3 3.500" /></Svg>
        内容检查
        <span className="pl-1"><Caret /></span>
      </button>
      <span className="w-1" />
      <Sep />
      <div className="flex-1" />
      <button aria-label="护眼模式" className="mr-[13px]"><Svg><path d="M0 9c4-6 12-6 16 0-4 6-12 6-16 0zM8 0v2.500M2.500 1.500l1 2M13.500 1.500l-1 2" /><circle cx="8" cy="9" r="3" /></Svg></button>
      <Sep />
      <button aria-label="页面视图" className="ml-[11px] flex h-6 w-[23px] items-center justify-center rounded-sm bg-[#d9dee6]"><Svg><path d="M1.500 1.500h10l3 3v10h-13zM4 6.500h8M4 10.500h8" /></Svg></button>
      <button aria-label="大纲" className="ml-2"><Svg><path d="M0 2.500h2M4 2.500h11M3 6.500h2M7 6.500h8M3 10.500h2M7 10.500h8M0 14.500h2M4 14.500h11" /></Svg></button>
      <button aria-label="阅读版式" className="ml-[9px]"><Svg><path d="M.5 1.500H6l2 1.500 2-1.500h5.500v12H10L8 15l-2-1.500H.5zM8 3v12" /></Svg></button>
      <button aria-label="Web版式" className="ml-[10px]"><Svg><circle cx="8" cy="8" r="7" /><ellipse cx="8" cy="8" rx="3.500" ry="7" /><path d="M1.500 5.500h13M1.500 10.500h13" /></Svg></button>
      <button aria-label="写作模式" className="ml-[10px]"><Svg><path d="M1 14l2-5 8-8 4 3.500-8 8zM3 9l4 3.500M1 14l4-3M2 15.500h13" /></Svg></button>
      <span className="w-[14px]" />
      <Sep />
      <button aria-label="适应窗口" className="ml-[14px]"><Svg><path d="M1.500 4.500v-3h3M11.500 1.500h3v3M14.500 11.500v3h-3M4.500 14.500h-3v-3M4.500 4.500h7v7h-7z" /></Svg></button>
      <button className="ml-[7px] flex items-center gap-1 text-[13px] text-[#3c4565]">104%<Caret /></button>
      <button aria-label="缩小" className="ml-3"><Svg s={10} sw={2}><path d="M0 5h10" /></Svg></button>
      <input
        type="range"
        aria-label="显示比例"
        defaultValue="50"
        className="mx-[11px] h-3 w-[140px] appearance-none bg-[linear-gradient(to_right,#3a4159_50%,#d5d9e2_50%)] bg-[length:100%_1px] bg-center bg-no-repeat [&::-webkit-slider-thumb]:size-3 [&::-webkit-slider-thumb]:appearance-none [&::-webkit-slider-thumb]:rounded-full [&::-webkit-slider-thumb]:border [&::-webkit-slider-thumb]:border-[#3a4159] [&::-webkit-slider-thumb]:bg-[#f5f7fa]"
      />
      <button aria-label="放大"><Svg s={10} sw={2}><path d="M0 5h10M5 0v10" /></Svg></button>
      <button aria-label="全屏" className="ml-3"><Svg><path d="M1.500 5V1.500H5M11 1.500h3.500V5M14.500 11v3.500H11M5 14.500H1.500V11M1.500 1.500l4.500 4.500M14.500 1.500L10 6M14.500 14.500L10 10M1.500 14.500L6 10" /></Svg></button>
    </footer>
  );
}

function Watermark() {
  return (
    <div className="pointer-events-none absolute bottom-2 right-[11px] flex items-center opacity-85">
      <svg width="44" height="42" viewBox="0 0 44 42" aria-hidden="true">
        <path d="M43 1C24-1 3 9 1 23c-1 6 4 9 11 8C2 25 14 9 43 1z" fill="#5aaee6" />
        <path d="M14 29c-4-9 5-15 15-15-8 3-14 9-10 14 2 2 6 1 9-1-4 5-10 6-14 2z" fill="#4a8fd2" />
        <path d="M36 13c9 8 2 21-15 22 9-3 16-11 15-22z" fill="#5cb860" />
        <path d="M42 16c1 13-12 22-36 22 14-2 28-8 36-22z" fill="#8ecb6a" />
        <path d="M5 39l14-4-5 5z" fill="#e7c84a" />
      </svg>
      <div className="flex flex-col">
        <span className="text-[21px] font-bold leading-[26px] text-[#5b9bdc]">极光下载站</span>
        <span className="font-['Liberation_Sans',sans-serif] text-[17px] leading-[18px] text-[#55b868]">www.xz7.com</span>
      </div>
    </div>
  );
}

export default function App() {
  return (
    <div className="relative flex h-screen flex-col overflow-hidden bg-[#f5f7fa] font-['Noto_Sans','Noto_Sans_CJK_SC',sans-serif] text-[12px] leading-[18px] text-[#262b3c] [&_button]:whitespace-nowrap">
      <div className="z-10 flex shrink-0 flex-col bg-white shadow-[0_1px_3px_rgba(0,0,0,0.12)]">
        <TitleBar />
        <MenuRow />
        <Ribbon />
      </div>
      <div className="flex min-h-0 flex-1">
        <Document />
        <ScrollColumn />
        <StylesPanel />
        <ToolStrip />
      </div>
      <StatusBar />
      <Watermark />
    </div>
  );
}
